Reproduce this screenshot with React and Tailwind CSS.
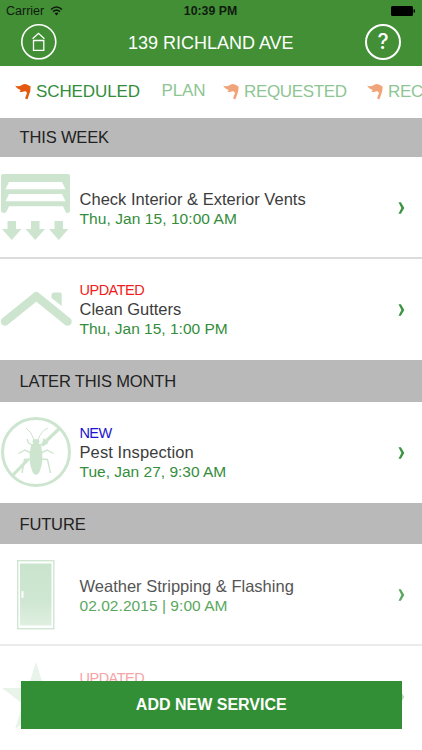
import React from "react";

function HomeIcon() {
  return (
    <svg className="h-9 w-9" viewBox="0 0 36 36" fill="none" stroke="white">
      <circle cx="17.800" cy="17.800" r="17" strokeWidth="1.600" />
      <path d="M11.600 14.800L17.500 9.300L23.400 14.800M12.500 16.500h10.300v9.800H12.500z" strokeWidth="1.300" />
    </svg>
  );
}

function HelpIcon() {
  return (
    <span className="flex h-9 w-9 items-center justify-center rounded-full border-2 border-white font-['Inter',sans-serif] text-[21px] leading-none font-medium text-white">
      ?
    </span>
  );
}

function Flag({ className }) {
  return (
    <svg className={"h-4 w-4 shrink-0 " + className} viewBox="0 0 16 16" fill="currentColor">
      <path d="M0.200 1.800C2.500 2.600 5 2.200 7 1C9 -0.200 10.500 -0.100 12 0.600L15.600 2.500L15.300 7L12.500 15.300L10 14.600L12 9L10.800 7.300C9 6.700 7.500 8.300 4.300 8C5.300 7.200 5.700 6.600 5.600 5.900C3.500 5.500 1.500 4 0.200 1.800Z" />
    </svg>
  );
}

function VentIcon() {
  return (
    <svg className="h-[70px] w-[72px]" viewBox="0 0 72 70" fill="#cde5cf">
      <path
        fillRule="evenodd"
        d="M3 2H68Q70 2 70 4V38Q70 41 67.500 41Q66 41 65.500 39.500L63 34.300H9L6.500 39.500Q5.500 41 4 41Q1 41 1 38V4Q1 2 3 2ZM9 10L5.500 17.300H65.500L62 10ZM9 22L5.500 29.300H65.500L62 22Z"
      />
      <path d="M7.500 49h8.500v8h5.500L11.700 68L2 57h5.500zM31 49h8.500v8H45L35.200 68L25.500 57H31zM54.500 49H63v8h5.500L58.700 68L49 57h5.500z" />
    </svg>
  );
}

function RoofIcon() {
  return (
    <svg className="h-10 w-[72px]" viewBox="0 0 72 40" fill="#cde5cf">
      <path d="M5 32.500L36.300 7.200L67.500 32.500" fill="none" stroke="#cde5cf" strokeWidth="8.500" strokeLinecap="round" strokeLinejoin="round" />
      <path d="M51.500 6.500Q51.500 3.500 54 3.500H60Q61.700 3.500 61.700 5.500V17L51.500 9Z" />
    </svg>
  );
}

function PestIcon() {
  return (
    <svg className="h-[72px] w-[72px]" viewBox="0 0 72 72" fill="none" stroke="#cde5cf">
      <circle cx="36" cy="36" r="33.500" strokeWidth="3" />
      <path d="M13 59L28 43.500M42.500 28.500L60 12" strokeWidth="3.200" />
      <path d="M34 24Q32 16 26 12M38 24Q41 15 48 12" strokeWidth="1" />
      <path d="M32 29L28.500 27L27 23M40 29L43 28L44 23M31 37L25 34L18.500 37.500M41 37L47 34L53.500 37.500M31 43L24.500 43.500L22 57M41 43L47.500 43.500L50.500 57" strokeWidth="1.400" />
      <path d="M42 31L43.500 22L48.500 27Z" fill="#cde5cf" stroke="none" />
      <ellipse cx="36" cy="25.500" rx="3.500" ry="2.500" fill="#cde5cf" stroke="none" />
      <path d="M31 29Q36 24 41 29Q44.500 45 39.500 56Q36 62 32.500 56Q27.500 45 31 29Z" fill="#cde5cf" stroke="none" />
    </svg>
  );
}

function DoorIcon() {
  return (
    <svg className="h-[70px] w-[38px]" viewBox="0 0 38 70">
      <defs>
        <linearGradient id="door" x1="0" y1="0" x2="0" y2="1">
          <stop offset="0" stopColor="#c9e4cd" />
          <stop offset="0.600" stopColor="#cfe7d2" />
          <stop offset="1" stopColor="#dfefe1" />
        </linearGradient>
      </defs>
      <rect x="0.700" y="0.700" width="36.100" height="68" fill="white" stroke="#cfe7d2" strokeWidth="1.400" />
      <rect x="3" y="3.500" width="31.500" height="62" fill="url(#door)" />
      <rect x="4.500" y="31" width="2" height="7" rx="0.800" fill="white" />
    </svg>
  );
}

function StarIcon() {
  return (
    <svg className="h-[70px] w-[72px]" viewBox="0 0 72 70" fill="#e8f3e9">
      <path d="M36 0L44 26H70L49 42L57 67L36 52L15 67L23 42L2 26H28Z" />
    </svg>
  );
}

function Chevron({ className }) {
  return (
    <svg className={"mt-px mr-[17px] h-3 w-[7px] " + className} viewBox="0 0 7 12" fill="currentColor">
      <path d="M0.500 0.200H2.900L6.300 6L2.900 11.800H0.500L3.400 6Z" />
    </svg>
  );
}

function SectionTitle({ className, children }) {
  return (
    <h2 className={"flex shrink-0 items-center bg-[#b9b9b9] pl-[19.500px] text-[16.500px] tracking-[-0.15px] whitespace-nowrap text-[#222] " + className}>
      {children}
    </h2>
  );
}

function ServiceRow({ icon, className, textClass, chevron = "text-[#3a9441]", children }) {
  return (
    <article className={"flex shrink-0 items-center bg-white " + className}>
      <div className="flex w-[79.500px] shrink-0 items-center">{icon}</div>
      <div className={"flex flex-1 flex-col leading-[19px] whitespace-nowrap " + textClass}>{children}</div>
      <Chevron className={chevron} />
    </article>
  );
}

export default function App() {
  return (
    <div className="relative flex h-[750px] w-[422px] flex-col overflow-hidden bg-white font-['Liberation_Sans',Arial,sans-serif]">
      <header className="flex h-[65.500px] shrink-0 flex-col bg-[#428f36]">
        <div className="grid h-[23px] grid-cols-3 items-center pb-[2px] pl-[6px] text-[#101b0e]">
          <div className="flex items-center gap-[6px]">
            <span className="mt-0.5 text-[12.500px]">Carrier</span>
            <svg className="h-[10px] w-[13px]" viewBox="0 0 12 10" fill="none" stroke="#101b0e" strokeWidth="1.600">
              <path d="M0.500 3.500Q6-1.500 11.500 3.500M2.500 5.700Q6 2.500 9.500 5.700" />
              <path d="M4 7.300Q6 5.700 8 7.300L6 9.400Z" fill="#101b0e" stroke="none" />
            </svg>
          </div>
          <span className="mt-0.5 -ml-[7px] text-center text-[12.300px] font-bold">10:39 PM</span>
          <svg className="mr-[6px] h-[10px] w-[26px] justify-self-end" viewBox="0 0 26 10" fill="black">
            <rect x="1" y="0" width="22" height="10" rx="1.500" />
            <rect x="23.500" y="3.300" width="1.500" height="3.400" rx="0.700" />
          </svg>
        </div>
        <div className="flex h-[37px] items-center justify-between pr-[21px] pl-[20.500px]">
          <HomeIcon />
          <h1 className="mt-[3px] text-[18px] whitespace-nowrap text-white">139 RICHLAND AVE</h1>
          <HelpIcon />
        </div>
      </header>

      <nav className="flex h-[52px] shrink-0 items-center overflow-hidden pl-[15px] text-[17px] tracking-[-0.1px] whitespace-nowrap text-[#8ec592]">
        <div className="flex w-[146.500px] shrink-0 items-center gap-[5px] text-[#338d3a]">
          <Flag className="text-[#e4580f]" />
          <span>SCHEDULED</span>
        </div>
        <span className="-mt-[2px] w-[61.500px] shrink-0">PLAN</span>
        <div className="flex w-[144px] shrink-0 items-center gap-[5px]">
          <Flag className="text-[#f1a47a]" />
          <span className="tracking-[-0.350px]">REQUESTED</span>
        </div>
        <div className="flex shrink-0 items-center gap-[5px]">
          <Flag className="text-[#f1a47a]" />
          <span className="tracking-[-0.350px]">REC</span>
        </div>
      </nav>

      <SectionTitle className="h-[39.500px]">THIS WEEK</SectionTitle>
      <ServiceRow className="h-[102px] border-b-2 border-[#dcdcdc]" textClass="pt-[4px]" icon={<VentIcon />}>
        <span className="text-[16.500px] tracking-[0.02px] text-[#3c3c3c]">Check Interior &amp; Exterior Vents</span>
        <span className="text-[15.500px] tracking-[0.07px] text-[#338d3a]">Thu, Jan 15, 10:00 AM</span>
      </ServiceRow>
      <ServiceRow className="h-[100.500px]" textClass="pt-[1px]" icon={<RoofIcon />}>
        <span className="text-[14.500px] tracking-[-0.500px] text-[#f01c20]">UPDATED</span>
        <span className="text-[16.500px] text-[#3c3c3c]">Clean Gutters</span>
        <span className="text-[15.500px] text-[#338d3a]">Thu, Jan 15, 1:00 PM</span>
      </ServiceRow>

      <SectionTitle className="h-[42px] pt-0.5">LATER THIS MONTH</SectionTitle>
      <ServiceRow className="h-[101px]" textClass="pt-0" icon={<PestIcon />}>
        <span className="text-[14.500px] tracking-[-0.600px] text-[#1a14d0]">NEW</span>
        <span className="text-[16.500px] tracking-[0.1px] text-[#3c3c3c]">Pest Inspection</span>
        <span className="text-[15.500px] text-[#338d3a]">Tue, Jan 27, 9:30 AM</span>
      </ServiceRow>

      <SectionTitle className="h-[41.500px] pt-0.5">FUTURE</SectionTitle>
      <ServiceRow
        className="h-[102px] border-b-2 border-[#ebebeb]"
        textClass="pt-[4px]"
        chevron="text-[#5aa860]"
        icon={<div className="pt-[2px] pl-[17px]"><DoorIcon /></div>}
      >
        <span className="text-[16.500px] text-[#555]">Weather Stripping &amp; Flashing</span>
        <span className="text-[15.500px] tracking-[0.05px] text-[#5aa860]">02.02.2015 | 9:00 AM</span>
      </ServiceRow>
      <ServiceRow className="h-[101px]" textClass="pb-[37px]" chevron="text-[#b9dcbb]" icon={<StarIcon />}>
        <span className="text-[14.500px] tracking-[-0.500px] text-[#f6a3a6]">UPDATED</span>
      </ServiceRow>

      <button className="absolute top-[680.500px] left-[21px] h-[48.500px] w-[380.500px] bg-[#338f36] text-[16px] font-bold text-white">
        ADD NEW SERVICE
      </button>
      <div className="absolute top-[729px] left-0 h-[21px] w-full bg-white" />
    </div>
  );
}
